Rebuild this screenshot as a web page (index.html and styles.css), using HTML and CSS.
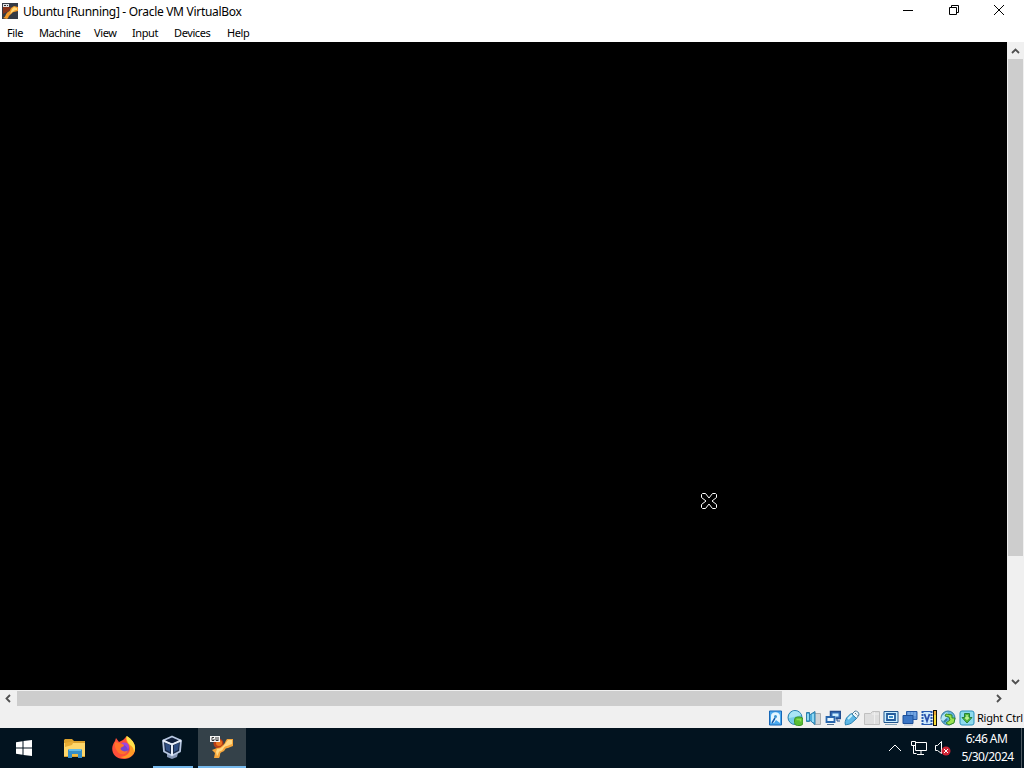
FILE: index.html
```html
<!DOCTYPE html>
<html lang="en">
<head>
  <meta charset="UTF-8" />
  <title>Ubuntu [Running] - Oracle VM VirtualBox</title>
  <link rel="stylesheet" href="styles.css">
</head>
<body>
  <div class="window">
    <header class="titlebar">
      <svg class="app-icon" viewBox="0 0 16 16">
        <path fill="#343b46" d="M0 0h16v16H0z"/>
        <path fill="#8a351b" d="M1 4h8l-2 4-6 3z"/>
        <path fill="#f39a28" d="M1 15c3-1 2-4 5-6 2-1 2-2 3-4l3-2 4 1v4l-4 1c-2 0-2 2-4 3-2 1-1 3-3 4z"/>
        <path fill="#ffda7a" d="M10 6l2-2 3 1v2c-3 0-3 1-7 4z"/>
        <path fill="#dfe2e5" d="M1 1h6v3H1z"/>
        <path stroke="#333" d="M2 2.500h2M5 2.500h1"/>
      </svg>
      <span class="title">Ubuntu [Running] - Oracle VM VirtualBox</span>
      <div class="window-buttons">
        <svg viewBox="0 0 12 12"><path d="M1 6.500h10"/></svg>
        <svg viewBox="0 0 12 12"><path d="M1.500 3.500h7v7h-7zM3.500 3.500v-2h7v7h-2"/></svg>
        <svg viewBox="0 0 12 12"><path d="M1 1l10 10M11 1L1 11"/></svg>
      </div>
    </header>

    <nav class="menubar">
      <span class="m-file">File</span>
      <span class="m-machine">Machine</span>
      <span class="m-view">View</span>
      <span class="m-input">Input</span>
      <span class="m-devices">Devices</span>
      <span class="m-help">Help</span>
    </nav>

    <main class="viewport">
      <div class="screen">
        <svg class="cursor" viewBox="0 0 18 18">
          <path d="M1.500 2.500l1-1h3L9 6l3.500-4.500h3l1 1v3L12 9l4.500 3.500v3l-1 1h-3L9 12l-3.500 4.500h-3l-1-1v-3L6 9 1.500 5.500z"/>
        </svg>
      </div>
      <div class="scroll-v">
        <svg class="arrow" viewBox="0 0 17 17"><path d="M5 11l3.500-3.500L12 11"/></svg>
        <div class="thumb-v"></div>
        <svg class="arrow bottom" viewBox="0 0 17 17"><path d="M5 7l3.500 3.500L12 7"/></svg>
      </div>
    </main>
    <div class="scroll-h">
      <svg class="arrow" viewBox="0 0 17 17"><path d="M10 5L6.500 8.500 10 12"/></svg>
      <div class="thumb-h"></div>
      <svg class="arrow right" viewBox="0 0 17 17"><path d="M7 5l3.500 3.500L7 12"/></svg>
    </div>

    <footer class="statusbar">
      <div class="indicators">
        <!-- hard disk -->
        <svg viewBox="0 0 16 16">
          <path d="M1.500 1h12v14h-12z" fill="#4aa9ee" stroke="#1667b7"/>
          <path d="M3 13V6c0-5 9-5 9 0v7l-4-3-2 3z" fill="#e4f6ff"/>
          <circle cx="7.500" cy="6.500" r="1.500" fill="#3994d2"/>
          <path d="M7 8l-3 5" stroke="#165aa8" stroke-width="1.500"/>
        </svg>
        <!-- optical disk -->
        <svg viewBox="0 0 16 16">
          <circle cx="8" cy="7.500" r="7" fill="#75cce9" stroke="#2b80b0"/>
          <path d="M2 8c4-1 6-1 12-3-1-3-4-4-7-4-3 1-5 3-5 7z" fill="#a9e5f6"/>
          <rect x="7.500" y="7" width="8.500" height="8.500" rx="3" fill="#59bd35" stroke="#3f9627"/>
          <path d="M9.500 9.500h4v2" fill="none" stroke="#8cdf50" stroke-width="1.500"/>
        </svg>
        <!-- audio -->
        <svg viewBox="0 0 16 16">
          <path d="M8 3.500h6.500v11H8z" fill="#d0d3d5" stroke="#a8acaf"/>
          <path d="M.5 2.500h3v9h-3zM3.500 5L9 1.500v13L3.500 10z" fill="#4daddb" stroke="#2e7eaa"/>
          <path d="M7 4v8M2 4v6" stroke="#a7e6fb" stroke-width="1.500"/>
        </svg>
        <!-- network -->
        <svg viewBox="0 0 16 16">
          <path d="M5.500 1.500h10v7h-10z" fill="#3472bd" stroke="#234e8f" stroke-width="1.500"/>
          <path d="M7.500 3.500h6v3h-6z" fill="#cceeff"/>
          <path d="M12 9v2h3" fill="none" stroke="#234e8f"/>
          <path d="M.5 6h10v7.500H.5z" fill="#f3faff"/>
          <path d="M1.500 7h8v5h-8z" fill="#eaf8ff" stroke="#2866ad" stroke-width="1.800"/>
          <path d="M2 14.500h7" stroke="#52718f"/>
        </svg>
        <!-- usb -->
        <svg viewBox="0 0 16 16">
          <path d="M8 4l3-3c2 0 4 1 4 4l-3 4z" fill="#eef7fb" stroke="#527f9a"/>
          <path d="M7 3.500l5.500 5-5 4.500c-3 2-4 1-6 2-1-3 0-4 1-7z" fill="#5db7e5" stroke="#257faf"/>
          <path d="M4 9l4-4" stroke="#caf1fc" stroke-width="2"/>
          <path d="M11 3l1 1M12.500 4.500l1 1" stroke="#536b79"/>
        </svg>
        <!-- shared folders -->
        <svg viewBox="0 0 16 16">
          <path d="M.5 3.500h6l2-2h7v13H.5z" fill="#dedede" stroke="#c0c0c0"/>
          <path d="M8 4h7M10.500 2v12" stroke="#efefef"/>
        </svg>
        <!-- display -->
        <svg viewBox="0 0 16 16">
          <path d="M1 1.500h14v11H1z" fill="#c9eeff" stroke="#21558d"/>
          <path d="M4 4h8v6H4z" fill="#e9faff" stroke="#245c9d" stroke-width="1.800"/>
          <path d="M6 7h4" stroke="#398bc8" stroke-width="2"/>
          <path d="M2 14.500h12" stroke="#85a5bb"/>
        </svg>
        <!-- recording -->
        <svg viewBox="0 0 16 16">
          <path d="M4.500 1.500h10.500v8H4.500z" fill="#5d91d5" stroke="#2458a6"/>
          <path d="M7 2v4M10 2v4M13 2v4" stroke="#8ab8ed"/>
          <path d="M1 5.500h10v8H1z" fill="#3b76c5" stroke="#1d5099"/>
          <path d="M2 15h9" stroke="#afbdcc"/>
        </svg>
        <!-- processor features -->
        <svg viewBox="0 0 16 16">
          <path d="M1 1h10v14H1z" fill="#cce9fd"/>
          <path d="M1.500 1v14M10.500 1v14" stroke="#285bb1" stroke-width="2" stroke-dasharray="2 1"/>
          <path d="M2 1.500h8M2 14.500h8" stroke="#285bb1"/>
          <path d="M3.500 4l2.500 7L8.500 4" fill="none" stroke="#2c51ac" stroke-width="1.800"/>
          <path d="M12 0h4v16h-4z" fill="#16150b"/>
          <path d="M13 1h2v5h-2z" fill="#eca634"/>
          <path d="M13 5h2v10h-2z" fill="#f4da35"/>
        </svg>
        <!-- mouse integration -->
        <svg viewBox="0 0 16 16">
          <circle cx="8" cy="8" r="7" fill="#65b7dc" stroke="#397ba0"/>
          <path d="M2 6l5-4 2 3-5 6-3-1z" fill="#b6e6f3"/>
          <path d="M6 4l6 1v3h3l-1 5-5 2-3-2 4-3-1-3-4-1z" fill="#9ae24f" stroke="#338828"/>
          <path d="M4 12l3-3" stroke="#347fa4" stroke-width="2"/>
        </svg>
        <!-- keyboard -->
        <svg viewBox="0 0 16 16">
          <rect x="1" y="1" width="14" height="14" rx="2" fill="#8cdaec" stroke="#2b8fbc"/>
          <path d="M5.500 3.500h5v4H13L8 13 3 7.500h2.500z" fill="#55b93c" stroke="#25803a"/>
          <path d="M8 5v5M6 8h4" stroke="#c5f49c" stroke-width="1.300"/>
        </svg>
      </div>
      <span class="host-key">Right Ctrl</span>
    </footer>
  </div>

  <div class="taskbar">
    <div class="task start">
      <svg class="start-icon" viewBox="0 0 16 16">
        <path fill="#fff" d="M0 2.200l6.500-1v6.300H0zM7.500 1L16 0v7.500H7.500zM0 8.500h6.500v6.300l-6.500-1zM7.500 8.500H16V16l-8.500-1z"/>
      </svg>
    </div>
    <div class="task explorer">
      <svg viewBox="0 0 24 24">
        <path fill="#dca22d" d="M1 4l1-1h7l2 2h11v16H1z"/>
        <path fill="#ffd76a" d="M1 7h21v13H1z"/>
        <path fill="#e9ad35" d="M2 7l9-2-2 4-7 2z"/>
        <path fill="#358ec5" d="M5 14l1-1h12l1 1v8h-4v-4H9v4H5z"/>
        <path fill="#67bde5" d="M6 13h12v2H6z"/>
        <path fill="#f2bc3d" d="M9 18h6v2H9z"/>
      </svg>
    </div>
    <div class="task">
      <svg viewBox="0 0 24 24">
        <path fill="#ff4f39" d="M3 5l1-3 3 4 4-2 3-3 3 5 4 1c5 8 0 16-9 16C1 23-3 13 3 5z"/>
        <path fill="#ff9a25" d="M14 0c6 3 10 8 9 14-1 7-9 10-15 7 6 0 10-4 10-8 0-5-5-6-4-13z"/>
        <path fill="#ffe34c" d="M15 0c6 4 10 10 7 16 0-5-3-6-5-8-2-3-3-5-2-8z"/>
        <circle cx="12" cy="12.500" r="5" fill="#7544d3"/>
        <path fill="#ff732b" d="M3 6l4 1 4 1c2 0 1 3-1 3-2 1-2 3 1 4 2 1 4 0 5-1-1 5-8 6-11 1-2-3-3-6-2-9z"/>
        <path fill="#a147dd" d="M9 7c6-2 10 2 7 7-1-4-4-5-7-7z"/>
      </svg>
    </div>
    <div class="task running">
      <svg viewBox="0 0 24 24">
        <path fill="#8595b3" d="M7 18l5 2 6-2-1 4-5 2-5-2z"/>
        <path fill="#182946" stroke="#b7c7e1" stroke-width="1.800" stroke-linejoin="round" d="M12 1.500l9 4-1 11-8 4-8-4-1-11z"/>
        <path fill="#304f83" d="M5 8l5 2v7l-4-2zM14 10l5-2-1 7-4 2z"/>
        <path fill="none" stroke="#e6edf8" stroke-width="2" d="M3 5.500l9 4 9-4M12 9.500v11"/>
        <path fill="#101f3a" d="M6 5.500l6-2.500 6 2.500-6 2.500z"/>
      </svg>
    </div>
    <div class="task active">
      <svg viewBox="0 0 24 24">
        <circle cx="8.500" cy="8.500" r="5" fill="#b73f17"/>
        <circle cx="9" cy="8" r="3" fill="#ed7924"/>
        <path fill="#f5a63b" d="M2 15l5-2c3 0 4-1 6-3 2-1 2-4 4-6h6v7l-5 2c-4 0-2 3-6 4-3 1-1 3-3 6H4l1-5z"/>
        <path fill="#ffd984" d="M7 14c4 0 6-3 8-5l3-4h4v4l-5 2c-4 0-3 4-6 5-3 0-2 3-4 5l-1-4z"/>
        <path fill="#f4f4f4" d="M0 1h10v6H0z"/>
        <path fill="none" stroke="#343434" d="M4 2.500H2v3h2V4M6 2v3.500h2.500M8 2v3"/>
      </svg>
    </div>

    <div class="tray">
      <svg class="chevron" viewBox="0 0 14 14"><path d="M1 10l6-6 6 6"/></svg>
      <svg class="net" viewBox="0 0 18 16"><path d="M5.500 2.500h11v8h-11zM11 11v3M7 14.500h7M1.500 1.500h4v4h-4zM3.500 5.500v8h3"/></svg>
      <svg class="sound" viewBox="0 0 18 16">
        <path d="M1.500 5.500h2l4-4v12l-4-3h-2z"/>
        <circle cx="12" cy="11" r="4.500"/>
        <path d="M10 9l4 4M14 9l-4 4"/>
      </svg>
      <div class="clock">
        <span class="time">6:46 AM</span>
        <span class="date">5/30/2024</span>
      </div>
      <div class="show-desktop"></div>
    </div>
  </div>
</body>
</html>
```
FILE: styles.css
```css
body {
  margin: 0;
  width: 1024px;
  height: 768px;
  overflow: hidden;
  font-family: "Noto Sans", "Open Sans", sans-serif;
  color: #000;
  background: #f0f0f0;
}
svg {
  display: block;
  flex: none;
}
.window {
  height: 728px;
  display: flex;
  flex-direction: column;
}
.titlebar {
  height: 24px;
  background: #fff;
  display: flex;
  align-items: center;
  box-sizing: border-box;
  padding-left: 2px;
}
.app-icon {
  width: 16px;
  height: 16px;
  margin-bottom: 2px;
}
.title {
  font-size: 12px;
  letter-spacing: -0.3px;
  margin-left: 5px;
  padding-bottom: 1px;
  white-space: nowrap;
}
.window-buttons {
  display: flex;
  gap: 33.5px;
  margin-left: auto;
  padding: 0 19px 4px 0;
}
.window-buttons svg {
  width: 12px;
  height: 12px;
  fill: none;
  stroke: #000;
}
.menubar {
  height: 18px;
  background: #fff;
  display: flex;
  padding-left: 7px;
  font-size: 11px;
  line-height: 18px;
  letter-spacing: -0.4px;
}
.m-file {
  width: 32px;
}
.m-machine {
  width: 55px;
}
.m-view {
  width: 38px;
}
.m-input {
  width: 42px;
}
.m-devices {
  width: 53px;
}
.viewport {
  height: 648px;
  display: flex;
}
.screen {
  width: 1007px;
  background: #000;
  position: relative;
}
.cursor {
  position: absolute;
  left: 700px;
  top: 450px;
  width: 18px;
  height: 18px;
  fill: #000;
  stroke: #fff;
}
.scroll-v {
  width: 17px;
  background: #f0f0f0;
  display: flex;
  flex-direction: column;
}
.arrow {
  width: 17px;
  height: 17px;
  fill: none;
  stroke: #505050;
  stroke-width: 1.8;
}
.thumb-v {
  height: 497px;
  margin-right: 1px;
  margin-left: 1px;
  background: #cdcdcd;
}
.bottom {
  margin-top: auto;
}
.scroll-h {
  height: 17px;
  display: flex;
  width: 1007px;
}
.thumb-h {
  width: 765px;
  height: 15px;
  margin-top: 1px;
  background: #cdcdcd;
}
.right {
  margin-left: auto;
}
.statusbar {
  height: 21px;
  display: flex;
  align-items: center;
  justify-content: flex-end;
}
.indicators {
  display: flex;
  gap: 3.1px;
}
.indicators svg {
  width: 16px;
  height: 16px;
}
.host-key {
  font-size: 11px;
  letter-spacing: -0.25px;
  width: 47px;
  margin-left: 2px;
  white-space: nowrap;
}
.taskbar {
  height: 40px;
  background: #02131f;
  display: flex;
}
.task {
  width: 49px;
  box-sizing: border-box;
  display: flex;
  align-items: center;
  justify-content: center;
}
.start {
  width: 48px;
}
.explorer {
  margin-left: 2px;
}
.task svg {
  width: 24px;
  height: 24px;
}
.task .start-icon {
  width: 16px;
  height: 16px;
}
.running {
  width: 40px;
  margin-left: 5px;
  padding-right: 3px;
  border-bottom: 2px solid #76b9ed;
}
.active {
  width: 48px;
  margin-left: 5px;
  background: #344149;
  border-bottom: 2px solid #76b9ed;
}
.tray {
  display: flex;
  align-items: center;
  margin-left: auto;
}
.tray svg {
  fill: none;
  stroke: #fff;
}
.chevron {
  width: 14px;
  height: 14px;
  margin-right: 8px;
}
.net {
  width: 18px;
  height: 16px;
  margin-right: 6px;
}
.sound {
  width: 18px;
  height: 16px;
}
.sound circle {
  fill: #cf2435;
  stroke: none;
}
.clock {
  width: 69px;
  color: #fff;
  font-size: 12px;
  line-height: 18px;
  letter-spacing: -0.55px;
  display: flex;
  flex-direction: column;
  align-items: center;
}
.date {
  padding-left: 2px;
}
.show-desktop {
  height: 40px;
  width: 2px;
  border-left: 1px solid #4e5961;
}
```
